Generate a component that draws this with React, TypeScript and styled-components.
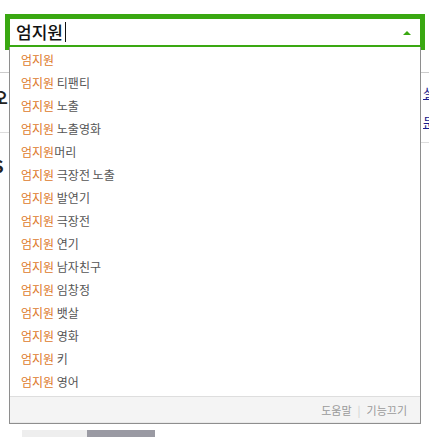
import React from 'react';
import styled, { createGlobalStyle } from 'styled-components';

const GlobalStyle = createGlobalStyle`
    html, body {
        margin: 0;
        padding: 0;
        background: #ffffff;
        overflow: hidden;
    }
    body {
        font-family: "Noto Sans CJK KR", "Noto Sans", sans-serif;
    }
`;

const Page = styled.div`
    position: relative;
    width: 429px;
    height: 437px;
    padding-top: 14px;
    box-sizing: border-box;
    overflow: hidden;
`;

const SearchBox = styled.div`
    position: relative;
    margin-left: 5px;
    width: 420px;
    height: 36px;
    box-sizing: border-box;
    border: 5px solid #3aa812;
    background: #ffffff;
    z-index: 2;
`;

const InputRow = styled.div`
    display: flex;
    align-items: center;
    justify-content: space-between;
    height: 26px;
    padding: 0 9px 0 6px;
`;

const Query = styled.div`
    display: flex;
    align-items: center;
    font-size: 17px;
    font-weight: 500;
    color: #111111;
    line-height: 20px;
`;

const Caret = styled.span`
    display: inline-block;
    width: 1px;
    height: 20px;
    margin-left: 2px;
    background: #111111;
`;

const ArrowUp = styled.span`
    width: 0;
    height: 0;
    border-left: 4px solid transparent;
    border-right: 4px solid transparent;
    border-bottom: 4px solid #3aa812;
    margin-top: 1px;
`;

const Dropdown = styled.div`
    position: absolute;
    top: 28px;
    left: -1px;
    width: 412px;
    box-sizing: border-box;
    background: #ffffff;
    border: 1px solid #8e8e8e;
    border-top: none;
`;

const List = styled.ul`
    list-style: none;
    margin: 0;
    padding: 1px 0 3px;
`;

const Item = styled.li`
    display: flex;
    align-items: center;
    height: 23px;
    padding-left: 11px;
    font-size: 12px;
    color: #555555;
    white-space: pre;
`;

const Match = styled.span`
    color: #dd7a2c;
`;

const Footer = styled.div`
    display: flex;
    justify-content: flex-end;
    align-items: center;
    gap: 6px;
    height: 25px;
    padding-right: 13px;
    background: #f4f4f4;
    border-top: 1px solid #dedede;
    border-bottom: 1px solid #e9e9e9;
    font-size: 11px;
    color: #9a9a9a;
`;

const Divider = styled.span`
    color: #cfcfcf;
`;

const Content = styled.div`
    display: flex;
    justify-content: space-between;
    height: 380px;
`;

const LeftCol = styled.div`
    width: 160px;
    margin-left: -7px;
`;

const RightCol = styled.div`
    width: 160px;
    margin-right: -6px;
    text-align: right;
`;

const Section = styled.div<{ $top: number; $height: number }>`
    margin-top: ${p => p.$top}px;
    height: ${p => p.$height}px;
    border-top: 1px solid #cccccc;
    border-bottom: 1px solid #dddddd;
    box-sizing: border-box;
`;

const BigText = styled.div`
    padding-top: 12px;
    font-size: 16px;
    font-weight: 700;
    color: #222222;
`;

const LinkLine = styled.a`
    display: block;
    margin-top: 10px;
    font-size: 13px;
    color: #1a1a8c;
    text-decoration: underline;
`;

const Initial = styled.div`
    margin-top: 20px;
    font-size: 17px;
    font-weight: 700;
    color: #222222;
`;

const BottomTabs = styled.div`
    display: flex;
    margin-left: 22px;
    height: 7px;
`;

const Tab = styled.div<{ $active?: boolean }>`
    width: ${p => (p.$active ? 68 : 65)}px;
    background: ${p => (p.$active ? '#9a9aa3' : '#eeeeee')};
`;

const suggestions = [
    '',
    ' 티팬티',
    ' 노출',
    ' 노출영화',
    '머리',
    ' 극장전 노출',
    ' 발연기',
    ' 극장전',
    ' 연기',
    ' 남자친구',
    ' 임창정',
    ' 뱃살',
    ' 영화',
    ' 키',
    ' 영어',
];

const App: React.FC = () => {
    return (
        <>
            <GlobalStyle />
            <Page>
                <SearchBox>
                    <InputRow>
                        <Query>
                            엄지원
                            <Caret />
                        </Query>
                        <ArrowUp />
                    </InputRow>
                    <Dropdown>
                        <List>
                            {suggestions.map((rest, i) => (
                                <Item key={i}>
                                    <Match>엄지원</Match>
                                    {rest}
                                </Item>
                            ))}
                        </List>
                        <Footer>
                            <span>도움말</span>
                            <Divider>|</Divider>
                            <span>기능끄기</span>
                        </Footer>
                    </Dropdown>
                </SearchBox>
                <Content>
                    <LeftCol>
                        <Section $top={22} $height={61}>
                            <BigText>오</BigText>
                        </Section>
                        <Initial>S</Initial>
                    </LeftCol>
                    <RightCol>
                        <Section $top={22} $height={71}>
                            <LinkLine>설</LinkLine>
                            <LinkLine>문</LinkLine>
                        </Section>
                    </RightCol>
                </Content>
                <BottomTabs>
                    <Tab />
                    <Tab $active />
                </BottomTabs>
            </Page>
        </>
    );
};

export default App;
